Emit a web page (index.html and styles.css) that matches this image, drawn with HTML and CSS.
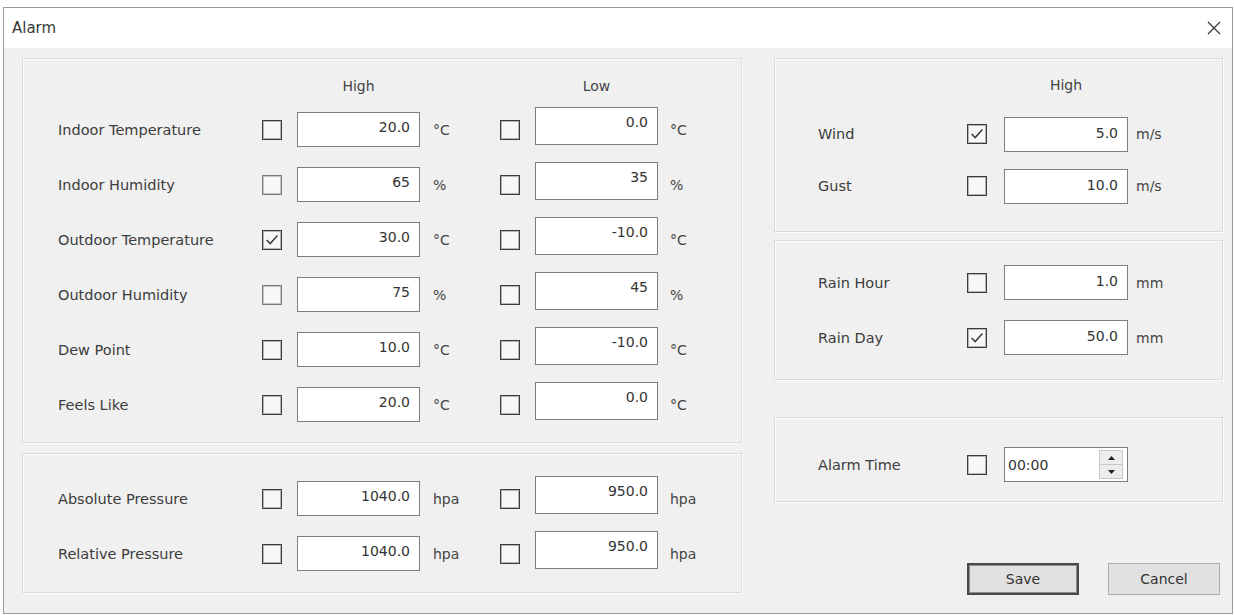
FILE: index.html
```html
<!DOCTYPE html>
<html lang="en">
<head>
    <meta charset="UTF-8">
    <title>Alarm</title>
    <link rel="stylesheet" href="styles.css">
</head>
<body>
    <div class="window">
        <div class="titlebar">
            <span class="title">Alarm</span>
            <svg class="close" width="14" height="14" viewBox="0 0 14 14">
                <path d="M1 1 L13 13 M13 1 L1 13" stroke="#3a3a3a" stroke-width="1.3" fill="none"/>
            </svg>
        </div>

        <div class="content">
            <div class="col-left">
                <div class="group grid-main sensors">
                    <span></span>
                    <span></span>
                    <span class="colhead">High</span>
                    <span></span>
                    <span></span>
                    <span class="colhead">Low</span>
                    <span></span>

                    <span class="label">Indoor Temperature</span>
                    <span class="box"></span>
                    <input class="num" value="20.0">
                    <span class="unit">°C</span>
                    <span class="box"></span>
                    <input class="num up" value="0.0">
                    <span class="unit">°C</span>

                    <span class="label">Indoor Humidity</span>
                    <span class="box dim"></span>
                    <input class="num" value="65">
                    <span class="unit">%</span>
                    <span class="box"></span>
                    <input class="num up" value="35">
                    <span class="unit">%</span>

                    <span class="label">Outdoor Temperature</span>
                    <span class="box"><svg viewBox="0 0 20 20"><path d="M4 10 L8 14 L16 5"/></svg></span>
                    <input class="num" value="30.0">
                    <span class="unit">°C</span>
                    <span class="box"></span>
                    <input class="num up" value="-10.0">
                    <span class="unit">°C</span>

                    <span class="label">Outdoor Humidity</span>
                    <span class="box dim"></span>
                    <input class="num" value="75">
                    <span class="unit">%</span>
                    <span class="box"></span>
                    <input class="num up" value="45">
                    <span class="unit">%</span>

                    <span class="label">Dew Point</span>
                    <span class="box"></span>
                    <input class="num" value="10.0">
                    <span class="unit">°C</span>
                    <span class="box"></span>
                    <input class="num up" value="-10.0">
                    <span class="unit">°C</span>

                    <span class="label">Feels Like</span>
                    <span class="box"></span>
                    <input class="num" value="20.0">
                    <span class="unit">°C</span>
                    <span class="box"></span>
                    <input class="num up" value="0.0">
                    <span class="unit">°C</span>
                </div>

                <div class="group grid-main pressure">
                    <span class="label">Absolute Pressure</span>
                    <span class="box"></span>
                    <input class="num" value="1040.0">
                    <span class="unit">hpa</span>
                    <span class="box"></span>
                    <input class="num up" value="950.0">
                    <span class="unit">hpa</span>

                    <span class="label">Relative Pressure</span>
                    <span class="box"></span>
                    <input class="num" value="1040.0">
                    <span class="unit">hpa</span>
                    <span class="box"></span>
                    <input class="num up" value="950.0">
                    <span class="unit">hpa</span>
                </div>
            </div>

            <div class="col-right">
                <div class="group grid-side wind">
                    <span></span>
                    <span></span>
                    <span class="colhead side-high">High</span>
                    <span></span>

                    <span class="label">Wind</span>
                    <span class="box"><svg viewBox="0 0 20 20"><path d="M4 10 L8 14 L16 5"/></svg></span>
                    <input class="num" value="5.0">
                    <span class="unit">m/s</span>

                    <span class="label">Gust</span>
                    <span class="box"></span>
                    <input class="num" value="10.0">
                    <span class="unit">m/s</span>
                </div>

                <div class="group grid-side rain">
                    <span class="label">Rain Hour</span>
                    <span class="box"></span>
                    <input class="num" value="1.0">
                    <span class="unit">mm</span>

                    <span class="label">Rain Day</span>
                    <span class="box"><svg viewBox="0 0 20 20"><path d="M4 10 L8 14 L16 5"/></svg></span>
                    <input class="num" value="50.0">
                    <span class="unit">mm</span>
                </div>

                <div class="group grid-side alarm">
                    <span class="label">Alarm Time</span>
                    <span class="box"></span>
                    <div class="time">
                        <span class="time-text">00:00</span>
                        <div class="spin">
                            <span class="spin-btn"><svg width="7" height="4" viewBox="0 0 7 4"><path d="M0 4 L3.5 0 L7 4 Z"/></svg></span>
                            <span class="spin-btn"><svg width="7" height="4" viewBox="0 0 7 4"><path d="M0 0 L7 0 L3.5 4 Z"/></svg></span>
                        </div>
                    </div>
                    <span></span>
                </div>

                <div class="buttons">
                    <button class="btn default">Save</button>
                    <button class="btn">Cancel</button>
                </div>
            </div>
        </div>
    </div>
</body>
</html>
```

FILE: styles.css
```css
body {
    margin: 0;
    background: #ffffff;
    font-family: "DejaVu Sans", sans-serif;
    font-size: 15px;
    color: #383838;
}

.window {
    margin: 7px 0 0 3px;
    width: 1230px;
    height: 607px;
    box-sizing: border-box;
    border: 1px solid #9c9c9c;
    display: flex;
    flex-direction: column;
}

.titlebar {
    height: 40px;
    background: #fff;
    display: flex;
    align-items: center;
    justify-content: space-between;
    padding: 0 11px 0 8px;
    flex-shrink: 0;
}

.title {
    color: #3a3a3a;
}

.content {
    flex: 1;
    background: #f0f0f0;
    display: flex;
    gap: 32px;
    padding: 10px 9px 0 18px;
}

.col-left {
    width: 720px;
    display: flex;
    flex-direction: column;
    gap: 10px;
}

.col-right {
    width: 449px;
    display: flex;
    flex-direction: column;
    padding-bottom: 18px;
}

.group {
    border: 1px solid #dadada;
    box-shadow: inset 1px 1px 0 #fbfbfb, 1px 1px 0 #fbfbfb;
    display: grid;
    align-items: center;
}

/* left side: label | box | high | unit | box | low | unit */
.grid-main {
    grid-template-columns: 204px 35px 123px 80px 35px 123px auto;
    padding-left: 35px;
}

.sensors {
    grid-template-rows: 32px;
    grid-auto-rows: 55px;
    padding-top: 11px;
    padding-bottom: 10px;
}

.pressure {
    grid-auto-rows: 55px;
    padding-top: 17px;
    padding-bottom: 11px;
}

.colhead {
    text-align: center;
    color: #444;
    font-size: 14px;
}

/* right side: label | box | value | unit */
.grid-side {
    grid-template-columns: 149px 37px 124px auto;
    padding-left: 43px;
}

.wind {
    grid-template-rows: 38px;
    grid-auto-rows: 52px;
    padding-top: 11px;
    padding-bottom: 19px;
}

.colhead.side-high {
    align-self: start;
    line-height: 30px;
}

.rain {
    margin-top: 8px;
    grid-auto-rows: 55px;
    padding-top: 14px;
    padding-bottom: 14px;
}

.alarm {
    margin-top: 37px;
    grid-auto-rows: 55px;
    padding-top: 19px;
    padding-bottom: 9px;
}

.label {
    font-size: 14.5px;
    color: #3c3c3c;
    white-space: nowrap;
}

.box {
    width: 20px;
    height: 20px;
    box-sizing: border-box;
    border: 1px solid #3c3c3c;
    box-shadow: inset 0 0 0 1px #b4b4b4;
    background: #f7f7f7;
    display: flex;
}

.box.dim {
    border-color: #7c7c7c;
    box-shadow: inset 0 0 0 1px #c4c4c4;
}

.box svg {
    width: 18px;
    height: 18px;
}

.box svg path {
    fill: none;
    stroke: #3a3a3a;
    stroke-width: 1.6;
}

.num {
    width: 123px;
    height: 35px;
    box-sizing: border-box;
    border: 1px solid #7d7d7d;
    background: #fff;
    font: inherit;
    font-size: 14px;
    color: #333;
    text-align: right;
    padding: 0 9px 5px 4px;
    outline: none;
}

.grid-side .num {
    width: 124px;
    padding-bottom: 3px;
}

.num.up {
    height: 38px;
    margin-bottom: 8px;
    padding-bottom: 8px;
}

.unit {
    padding-left: 13px;
    font-size: 14px;
    color: #444;
    white-space: nowrap;
}

.grid-main .unit:nth-child(7n) {
    padding-left: 12px;
}

.grid-side .unit {
    padding-left: 8px;
}

.time {
    width: 124px;
    height: 35px;
    box-sizing: border-box;
    border: 1px solid #7d7d7d;
    background: #fff;
    display: flex;
    align-items: center;
    justify-content: space-between;
    padding: 0 4px 0 3px;
}

.time-text {
    font-size: 14px;
    color: #333;
}

.spin {
    width: 24px;
    height: 29px;
    display: flex;
    flex-direction: column;
    gap: 1px;
    background: #c8c8c8;
    border: 1px solid #c8c8c8;
    box-sizing: border-box;
}

.spin-btn {
    flex: 1;
    background: #ececec;
    display: flex;
    align-items: center;
    justify-content: center;
}

.spin-btn path {
    fill: #222;
}

.buttons {
    margin-top: auto;
    display: flex;
    justify-content: flex-end;
    gap: 29px;
    padding-right: 3px;
}

.btn {
    width: 112px;
    height: 32px;
    box-sizing: border-box;
    font: inherit;
    font-size: 14px;
    color: #333;
    background: #e1e1e1;
    border: 1px solid #adadad;
}

.btn.default {
    border: 2px solid #4a4a4a;
    box-shadow: inset 0 0 0 1px #8c8c8c;
}
```
